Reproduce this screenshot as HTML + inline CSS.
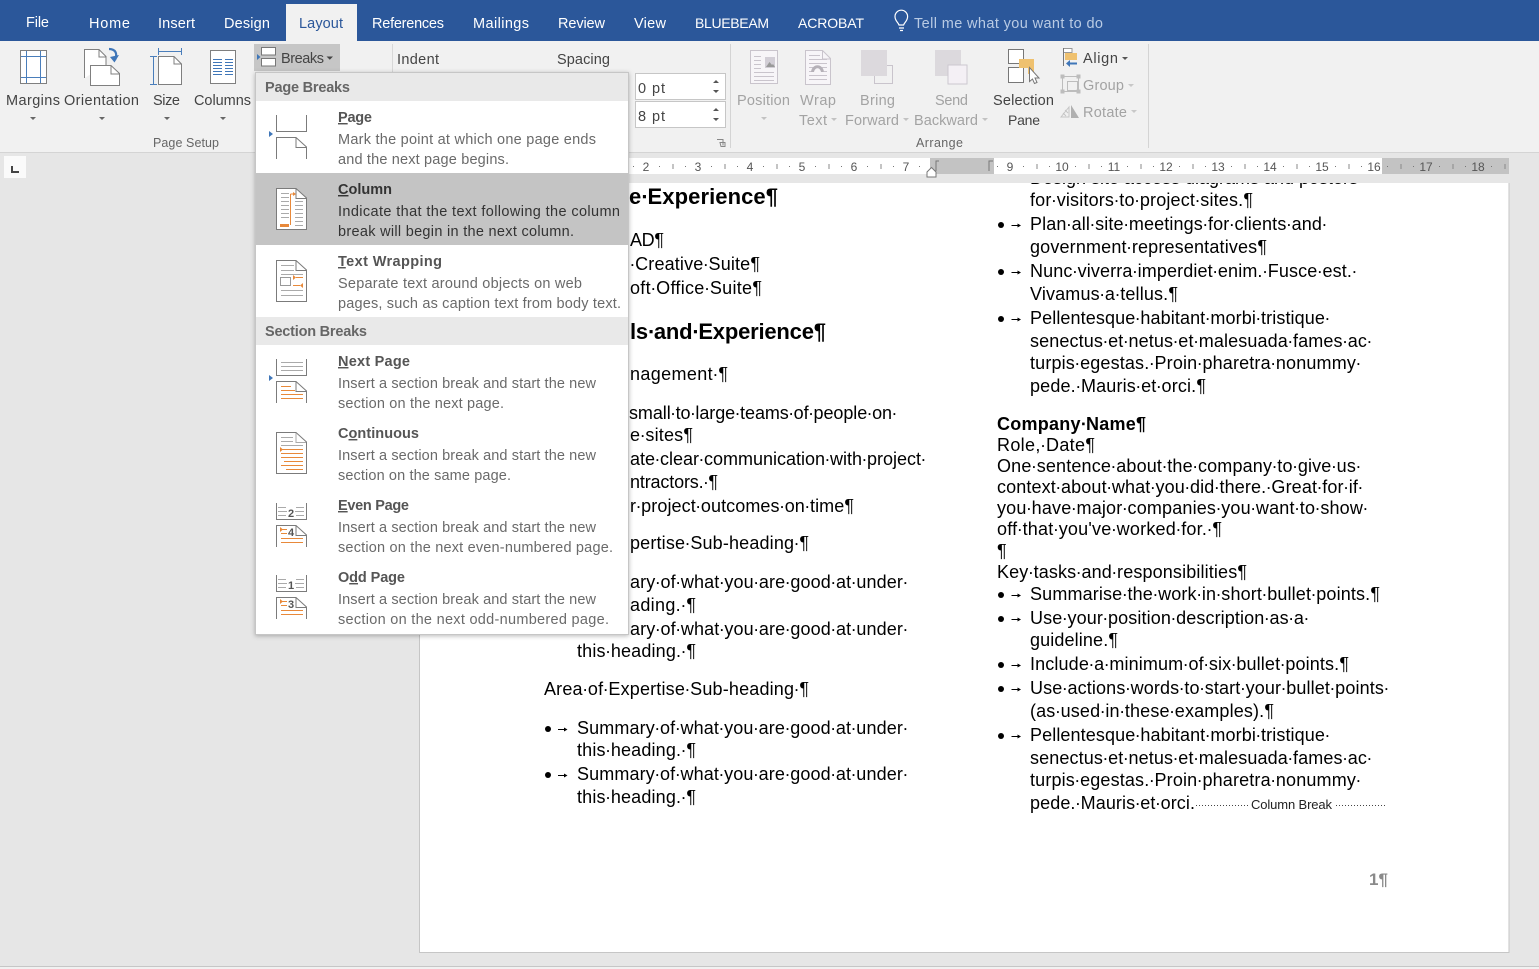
<!DOCTYPE html>
<html lang="en"><head><meta charset="utf-8"><title>Word Layout Breaks</title>
<style>
html,body{margin:0;padding:0;width:1539px;height:969px;overflow:hidden;background:#e6e6e6}
svg{display:block}
text{font-family:"Liberation Sans",sans-serif;white-space:pre}
.t{font-size:14.5px;fill:#fff}
.r{font-size:14.5px;fill:#444}
.g{font-size:14.5px;fill:#a3a3a3}
.s{font-size:12.5px;fill:#666}
.m{font-size:12px;fill:#555;text-anchor:middle}
.h{font-size:14.5px;font-weight:bold;fill:#555}
.k{font-size:14.5px;font-weight:bold;fill:#666}
.d{font-size:14.5px;fill:#6a6a6a}
.c{font-size:14.5px;fill:#333}
.b{font-size:18px;fill:#000}
.bb{font-size:18px;font-weight:bold;fill:#000}
.hh{font-size:22px;font-weight:bold;fill:#000}
.u{text-decoration:underline}
</style></head><body>
<svg xmlns="http://www.w3.org/2000/svg" width="1539" height="969" viewBox="0 0 1539 969">
<defs><filter id="sh" x="-5%" y="-5%" width="110%" height="110%"><feDropShadow dx="0" dy="1" stdDeviation="2.5" flood-color="#000" flood-opacity=".28"/></filter></defs>
<rect width="1539" height="969" fill="#e6e6e6"/>
<!-- title tabs -->
<rect width="1539" height="41" fill="#2b579a"/>
<rect y="41" width="1539" height="111" fill="#f1f1f1"/>
<rect y="152" width="1539" height="1" fill="#d4d4d4"/>
<rect x="286" y="4" width="71" height="38" fill="#f1f1f1"/>
<text class="t" x="26" y="27" textLength="23">File</text>
<text class="t" x="89" y="28" textLength="41">Home</text>
<text class="t" x="158" y="28" textLength="37">Insert</text>
<text class="t" x="224" y="28" textLength="46">Design</text>
<text class="t" x="299" y="28" textLength="44" style="fill:#2b579a">Layout</text>
<text class="t" x="372" y="28" textLength="72">References</text>
<text class="t" x="473" y="28" textLength="56">Mailings</text>
<text class="t" x="558" y="28" textLength="47">Review</text>
<text class="t" x="634" y="28" textLength="32">View</text>
<text class="t" x="695" y="28" textLength="74" style="font-size:14px">BLUEBEAM</text>
<text class="t" x="798" y="28" textLength="66" style="font-size:14px">ACROBAT</text>
<text class="t" x="914" y="28" textLength="189" style="fill:#b9cbe4">Tell me what you want to do</text>
<path d="M899 25c-1-3-4-4-4-8.500a6.300 6.300 0 0 1 12.600 0c0 4.500-3 5.500-4 8.500zM899 28h5M900 30.500h3" fill="none" stroke="#fff" stroke-width="1.200"/>
<!-- ribbon: Page Setup -->
<g fill="none" stroke="#7f7f7f">
<rect x="20.500" y="50.500" width="26" height="33" fill="#fff"/>
<path d="M26.500 51v32M40.500 51v32M21 56.500h25M21 77.500h25" stroke="#4a7ebb"/>
<path d="M84.500 78V49.500H99l7 7V65" fill="#fff"/>
<path d="M99 50v7h7"/>
<path d="M90.500 85.500V65.500H111l8.500 8v12z" fill="#fff"/>
<path d="M111 66v8h8"/>
<path d="M158.500 56.500H174l7.500 7.500v20.500h-23z" fill="#fff"/>
<path d="M174 57v7h7"/>
<path d="M158 51.500h24M158.500 48v7M181.500 48v7M153.500 57v28M150 56.500h7M150 84.500h7" stroke="#4a7ebb"/>
<rect x="210.500" y="50.500" width="25" height="33" fill="#fff"/>
<path d="M213 59.500h9M225 59.500h8M213 62.500h9M225 62.500h8M213 65.500h9M225 65.500h8M213 68.500h9M225 68.500h8M213 71.500h9M225 71.500h8M213 74.500h9M225 74.500h8" stroke="#3f76b8"/>
</g>
<path d="M109 49c6 0 9 4 6 11" fill="none" stroke="#3f76b8" stroke-width="2.200"/>
<path d="M110 57l4.500 5.500L119 55z" fill="#3f76b8"/>
<text class="r" x="6" y="105" textLength="54">Margins</text>
<text class="r" x="64" y="105" textLength="75">Orientation</text>
<text class="r" x="153" y="105" textLength="27">Size</text>
<text class="r" x="194" y="105" textLength="57">Columns</text>
<path d="M30 117h6l-3 3zM99 117h6l-3 3zM164 117h6l-3 3zM220 117h6l-3 3z" fill="#666"/>
<text class="s" x="153" y="147" textLength="66">Page Setup</text>
<!-- Breaks button -->
<rect x="254" y="44" width="86" height="27" fill="#c6c6c6"/>
<path d="M261.500 48v-0.500h14v7.500h-14zM261.500 66v-7.500h14V66z" fill="#fff" stroke="#777"/>
<path d="M257 54l3.500 3-3.500 3z" fill="#3f76b8"/>
<text class="r" x="281" y="63" textLength="43">Breaks</text>
<path d="M326.500 56.500h6.500l-3.200 3.200z" fill="#444"/>
<rect x="392" y="44" width="1" height="104" fill="#d8d8d8"/>
<text class="r" x="397" y="64" textLength="42">Indent</text>
<text class="r" x="557" y="64" textLength="53">Spacing</text>
<rect x="635.500" y="73.500" width="90" height="26" fill="#fff" stroke="#c6c6c6"/>
<rect x="635.500" y="101.500" width="90" height="26" fill="#fff" stroke="#c6c6c6"/>
<text class="r" x="638" y="93" textLength="27">0 pt</text>
<text class="r" x="638" y="121" textLength="27">8 pt</text>
<path d="M713 83l3-3 3 3zM713 90l3 3 3-3zM713 111l3-3 3 3zM713 118l3 3 3-3z" fill="#555"/>
<path d="M717 139.500h6v6M720 142.500h5v4h-4z" fill="none" stroke="#888"/>
<rect x="730" y="44" width="1" height="104" fill="#d4d4d4"/>
<!-- Arrange -->
<g fill="none" stroke="#c9c4cc">
<rect x="750.500" y="50.500" width="27" height="33" fill="#f7f5f8"/>
<path d="M754 56.500h7M754 60.500h7M754 64.500h7M754 68.500h7M754 72.500h20M754 76.500h20M754 80.500h20"/>
<path d="M805.500 50.500h17l8 8v26h-25z" fill="#f7f5f8"/>
<path d="M822.500 51v8h8M809 55.500h11M809 59.500h18M809 63.500h18M809 67.500h5M822 67.500h5M809 71.500h3M824 71.500h3M809 75.500h18M809 79.500h18"/>
<rect x="874.500" y="65.500" width="18" height="18"/>
<rect x="948.500" y="65.500" width="18" height="18" fill="#f4f0f5"/>
</g>
<rect x="765" y="57" width="10" height="11" fill="#d2ced6"/>
<path d="M766 67l3.500-5 2.500 3 1-1 2 3z" fill="#999"/>
<path d="M811 72c1-9 12-9 13 0h-3c-1-5-6-5-7 0z" fill="#b5b1b8"/>
<rect x="861" y="50" width="26" height="26" fill="#dcd9dd"/>
<rect x="935" y="50" width="26" height="26" fill="#dcd9dd"/>
<rect x="948" y="65" width="19" height="19" fill="#f4f0f5" stroke="#ccc8d0"/>
<text class="g" x="737" y="105" textLength="53">Position</text>
<path d="M761 117h6l-3 3z" fill="#c2c2c2"/>
<text class="g" x="800" y="105" textLength="36">Wrap</text>
<text class="g" x="799" y="125" textLength="28">Text</text>
<path d="M831 118h6l-3 3z" fill="#c2c2c2"/>
<text class="g" x="860" y="105" textLength="35">Bring</text>
<text class="g" x="845" y="125" textLength="54">Forward</text>
<path d="M903 118h6l-3 3z" fill="#c2c2c2"/>
<text class="g" x="935" y="105" textLength="33">Send</text>
<text class="g" x="914" y="125" textLength="64">Backward</text>
<path d="M982 118h6l-3 3z" fill="#c2c2c2"/>
<!-- selection pane -->
<rect x="1008.500" y="49.500" width="15" height="14" fill="#fff" stroke="#777"/>
<rect x="1008.500" y="67.500" width="15" height="15" fill="#fff" stroke="#777"/>
<path d="M1019 59h15v15h-6v-6h-9z" fill="#efc16f"/>
<path d="M1029.500 67.500v14l3-2.500 2 4.500 2.500-1-2-4.500h4z" fill="#fff" stroke="#777"/>
<text class="r" x="993" y="105" textLength="61">Selection</text>
<text class="r" x="1008" y="125" textLength="32" style="font-size:14px">Pane</text>
<text class="s" x="916" y="147" textLength="47">Arrange</text>
<path d="M1063.500 48v18" stroke="#777" fill="none"/>
<path d="M1064 48.500h8v4h-8" fill="#fff" stroke="#999"/>
<rect x="1065" y="53" width="12" height="7" fill="#efc16f"/>
<path d="M1077 63.500h-8" stroke="#3f76b8" stroke-width="2" fill="none"/>
<path d="M1070 60l-4 3.500 4 3.500z" fill="#3f76b8"/>
<text class="r" x="1083" y="63" textLength="35">Align</text>
<path d="M1122 57h6l-3 3z" fill="#555"/>
<g fill="none" stroke="#bdbdbd">
<rect x="1062.500" y="76.500" width="16" height="15"/>
<rect x="1067.500" y="81.500" width="10" height="9"/>
<path d="M1061 75h3v3h-3zM1077 75h3v3h-3zM1061 90h3v3h-3zM1077 90h3v3h-3z" fill="#bdbdbd"/>
</g>
<text class="g" x="1083" y="90" textLength="41">Group</text>
<path d="M1128 84h6l-3 3z" fill="#c8c8c8"/>
<path d="M1061 117l8-10v10zM1063 113l3 3M1065 110l3 3" fill="none" stroke="#c5c5c5"/>
<path d="M1071 105l8 13h-8z" fill="#b0b0b0"/>
<text class="g" x="1083" y="117" textLength="44">Rotate</text>
<path d="M1131 110h6l-3 3z" fill="#c8c8c8"/>
<rect x="1148" y="44" width="1" height="104" fill="#d4d4d4"/>
<!-- tab stop selector -->
<rect x="4" y="156" width="22" height="22" fill="#fafafa"/>
<path d="M12 166v6h7" fill="none" stroke="#444" stroke-width="2"/>
<!-- page -->
<rect x="420" y="183" width="1089" height="769" fill="#fff"/>
<path d="M419.500 183v769.500h1089.500V183" fill="none" stroke="#c6c6c6"/>
<rect y="966" width="1539" height="1" fill="#c6c6c6"/>
<rect y="967" width="1539" height="2" fill="#f1f1f1"/>
<!-- left column -->
<text class="hh" x="629" y="204" textLength="149">e∙Experience¶</text>
<text class="b" x="630" y="246" textLength="34">AD¶</text>
<text class="b" x="630" y="270" textLength="130">∙Creative∙Suite¶</text>
<text class="b" x="630" y="294" textLength="132">oft∙Office∙Suite¶</text>
<text class="hh" x="630" y="339" textLength="196">ls∙and∙Experience¶</text>
<text class="b" x="630" y="380" textLength="98">nagement∙¶</text>
<text class="b" x="629" y="419" textLength="268">small∙to∙large∙teams∙of∙people∙on∙</text>
<text class="b" x="630" y="441" textLength="63">e∙sites¶</text>
<text class="b" x="630" y="465" textLength="296">ate∙clear∙communication∙with∙project∙</text>
<text class="b" x="630" y="488" textLength="88">ntractors.∙¶</text>
<text class="b" x="630" y="512" textLength="224">r∙project∙outcomes∙on∙time¶</text>
<text class="b" x="630" y="549" textLength="179">pertise∙Sub-heading∙¶</text>
<text class="b" x="630" y="588" textLength="278">ary∙of∙what∙you∙are∙good∙at∙under∙</text>
<text class="b" x="630" y="611" textLength="66">ading.∙¶</text>
<text class="b" x="630" y="635" textLength="278">ary∙of∙what∙you∙are∙good∙at∙under∙</text>
<text class="b" x="577" y="657" textLength="119">this∙heading.∙¶</text>
<text class="b" x="544" y="695" textLength="265">Area∙of∙Expertise∙Sub-heading∙¶</text>
<text class="b" x="577" y="734" textLength="331">Summary∙of∙what∙you∙are∙good∙at∙under∙</text>
<text class="b" x="577" y="756" textLength="119">this∙heading.∙¶</text>
<text class="b" x="577" y="780" textLength="331">Summary∙of∙what∙you∙are∙good∙at∙under∙</text>
<text class="b" x="577" y="803" textLength="119">this∙heading.∙¶</text>
<g fill="#000"><circle cx="548" cy="729" r="3"/><circle cx="548" cy="775" r="3"/><circle cx="1001" cy="225" r="3"/><circle cx="1001" cy="272" r="3"/><circle cx="1001" cy="319" r="3"/><circle cx="1001" cy="595" r="3"/><circle cx="1001" cy="619" r="3"/><circle cx="1001" cy="665" r="3"/><circle cx="1001" cy="689" r="3"/><circle cx="1001" cy="736" r="3"/></g>
<path d="M558 729.500h6M558 775.500h6M1011.500 225.500h6M1011.500 272.500h6M1011.500 319.500h6M1011.500 595.500h6M1011.500 619.500h6M1011.500 665.500h6M1011.500 689.500h6M1011.500 736.500h6" stroke="#000" fill="none"/>
<path d="M564 727.500l3.500 2-3.500 2zM564 773.500l3.500 2-3.500 2zM1017.500 223.500l3.500 2-3.500 2zM1017.500 270.500l3.500 2-3.500 2zM1017.500 317.500l3.500 2-3.500 2zM1017.500 593.500l3.500 2-3.500 2zM1017.500 617.500l3.500 2-3.500 2zM1017.500 663.500l3.500 2-3.500 2zM1017.500 687.500l3.500 2-3.500 2zM1017.500 734.500l3.500 2-3.500 2z" fill="#000"/>
<!-- right column -->
<text class="b" x="1030" y="184" textLength="333">Design∙site∙access∙diagrams∙and∙posters∙</text>
<text class="b" x="1030" y="206" textLength="223">for∙visitors∙to∙project∙sites.¶</text>
<text class="b" x="1030" y="230" textLength="297">Plan∙all∙site∙meetings∙for∙clients∙and∙</text>
<text class="b" x="1030" y="253" textLength="237">government∙representatives¶</text>
<text class="b" x="1030" y="277" textLength="327">Nunc∙viverra∙imperdiet∙enim.∙Fusce∙est.∙</text>
<text class="b" x="1030" y="300" textLength="148">Vivamus∙a∙tellus.¶</text>
<text class="b" x="1030" y="324" textLength="300">Pellentesque∙habitant∙morbi∙tristique∙</text>
<text class="b" x="1030" y="347" textLength="342">senectus∙et∙netus∙et∙malesuada∙fames∙ac∙</text>
<text class="b" x="1030" y="369" textLength="331">turpis∙egestas.∙Proin∙pharetra∙nonummy∙</text>
<text class="b" x="1030" y="392" textLength="176">pede.∙Mauris∙et∙orci.¶</text>
<text class="bb" x="997" y="430" textLength="149">Company∙Name¶</text>
<text class="b" x="997" y="451" textLength="98">Role,∙Date¶</text>
<text class="b" x="997" y="472" textLength="364">One∙sentence∙about∙the∙company∙to∙give∙us∙</text>
<text class="b" x="997" y="493" textLength="366">context∙about∙what∙you∙did∙there.∙Great∙for∙if∙</text>
<text class="b" x="997" y="514" textLength="371">you∙have∙major∙companies∙you∙want∙to∙show∙</text>
<text class="b" x="997" y="535" textLength="225">off∙that∙you've∙worked∙for.∙¶</text>
<text class="b" x="997" y="557">¶</text>
<text class="b" x="997" y="578" textLength="250">Key∙tasks∙and∙responsibilities¶</text>
<text class="b" x="1030" y="600" textLength="350">Summarise∙the∙work∙in∙short∙bullet∙points.¶</text>
<text class="b" x="1030" y="624" textLength="279">Use∙your∙position∙description∙as∙a∙</text>
<text class="b" x="1030" y="646" textLength="88">guideline.¶</text>
<text class="b" x="1030" y="670" textLength="319">Include∙a∙minimum∙of∙six∙bullet∙points.¶</text>
<text class="b" x="1030" y="694" textLength="359">Use∙actions∙words∙to∙start∙your∙bullet∙points∙</text>
<text class="b" x="1030" y="717" textLength="244">(as∙used∙in∙these∙examples).¶</text>
<text class="b" x="1030" y="741" textLength="300">Pellentesque∙habitant∙morbi∙tristique∙</text>
<text class="b" x="1030" y="764" textLength="342">senectus∙et∙netus∙et∙malesuada∙fames∙ac∙</text>
<text class="b" x="1030" y="786" textLength="331">turpis∙egestas.∙Proin∙pharetra∙nonummy∙</text>
<text class="b" x="1030" y="809" textLength="165">pede.∙Mauris∙et∙orci.</text>
<path d="M1196 805.500h53M1336 805.500h51" stroke="#444" stroke-dasharray="1 2" fill="none"/>
<text x="1251" y="809" font-size="13" textLength="81" fill="#222">Column Break</text>
<text x="1369" y="885" font-size="17" font-weight="bold" textLength="19" fill="#8a8a8a">1¶</text>
<!-- ruler (covers top of page overflow) -->
<rect x="419" y="174" width="1091" height="9" fill="#e6e6e6"/>
<rect x="420" y="158" width="962" height="16" fill="#fff"/>
<rect x="1382" y="158" width="127" height="16" fill="#c3c3c3"/>
<path d="M633 166.500H1509" stroke="#777" stroke-dasharray="1 25" fill="none"/>
<path d="M672.500 166.500H1509" stroke="#888" stroke-width="5" stroke-dasharray="1 51" fill="none"/>
<rect x="930" y="158" width="64" height="16" fill="#c3c3c3"/>
<path d="M936 171v-10h3M989 171v-10h4" fill="none" stroke="#777"/>
<path d="M927 177v-5l4.500-4.500 4.500 4.500v5z" fill="#fff" stroke="#777"/>
<g>
<text class="m" x="646" y="171">2</text><text class="m" x="698" y="171">3</text><text class="m" x="750" y="171">4</text><text class="m" x="802" y="171">5</text><text class="m" x="854" y="171">6</text><text class="m" x="906" y="171">7</text><text class="m" x="1010" y="171">9</text><text class="m" x="1062" y="171">10</text><text class="m" x="1114" y="171">11</text><text class="m" x="1166" y="171">12</text><text class="m" x="1218" y="171">13</text><text class="m" x="1270" y="171">14</text><text class="m" x="1322" y="171">15</text><text class="m" x="1374" y="171">16</text><text class="m" x="1426" y="171">17</text><text class="m" x="1478" y="171">18</text>
</g>
<!-- dropdown menu -->
<rect x="255.500" y="72.500" width="373" height="562" fill="#fff" stroke="#c6c6c6" filter="url(#sh)"/>
<rect x="256" y="73" width="372" height="28" fill="#e9e9e9"/>
<rect x="256" y="317" width="372" height="28" fill="#e9e9e9"/>
<rect x="256" y="173" width="372" height="72" fill="#c4c4c4"/>
<text class="k" x="265" y="92" textLength="85">Page Breaks</text>
<text class="k" x="265" y="336" textLength="102">Section Breaks</text>

<text class="h" x="338" y="122" textLength="34"><tspan class="u">P</tspan>age</text>
<text class="d" x="338" y="144" textLength="258">Mark the point at which one page ends</text>
<text class="d" x="338" y="164" textLength="171">and the next page begins.</text>
<text class="h" x="338" y="194" textLength="54" style="fill:#333"><tspan class="u">C</tspan>olumn</text>
<text class="c" x="338" y="216" textLength="282">Indicate that the text following the column</text>
<text class="c" x="338" y="236" textLength="236">break will begin in the next column.</text>
<text class="h" x="338" y="266" textLength="104"><tspan class="u">T</tspan>ext Wrapping</text>
<text class="d" x="338" y="288" textLength="244">Separate text around objects on web</text>
<text class="d" x="338" y="308" textLength="283">pages, such as caption text from body text.</text>
<text class="h" x="338" y="366" textLength="72"><tspan class="u">N</tspan>ext Page</text>
<text class="d" x="338" y="388" textLength="258">Insert a section break and start the new</text>
<text class="d" x="338" y="408" textLength="166">section on the next page.</text>
<text class="h" x="338" y="438" textLength="81">C<tspan class="u">o</tspan>ntinuous</text>
<text class="d" x="338" y="460" textLength="258">Insert a section break and start the new</text>
<text class="d" x="338" y="480" textLength="173">section on the same page.</text>
<text class="h" x="338" y="510" textLength="71"><tspan class="u">E</tspan>ven Page</text>
<text class="d" x="338" y="532" textLength="258">Insert a section break and start the new</text>
<text class="d" x="338" y="552" textLength="275">section on the next even-numbered page.</text>
<text class="h" x="338" y="582" textLength="67">O<tspan class="u">d</tspan>d Page</text>
<text class="d" x="338" y="604" textLength="258">Insert a section break and start the new</text>
<text class="d" x="338" y="624" textLength="271">section on the next odd-numbered page.</text>
<!-- menu icons -->
<g fill="none" stroke="#7b7b7b">
<path d="M276.500 115v16.500h30V115M276.500 159v-21.500H296l10.500 9.500V159M296 138v9.500h10"/>
<path d="M276.500 188.500H296l10.500 9.500v31.500h-30z" fill="#fff"/>
<path d="M296 189v9.500h10"/>
<path d="M281 193.500h8M281 197.500h8M281 201.500h8M281 205.500h8M281 209.500h8M281 213.500h8M281 217.500h8M295 201.500h8M295 205.500h8M295 209.500h8M295 213.500h8M295 217.500h8M295 221.500h8M295 225.500h8" stroke="#aaa"/>
<path d="M276.500 260.500H296l10.500 9.500v31.500h-30z" fill="#fff"/>
<path d="M296 261v9.500h10"/>
<path d="M281 265.500h13M281 270.500h13M281 274.500h22M281 290.500h22M281 295.500h22" stroke="#aaa"/>
<rect x="280.500" y="277.500" width="10" height="8" stroke="#999"/>
<path d="M276.500 359v16.500h30V359M276.500 403v-21.500H296l10.500 9.500V403M296 382v9.500h10"/>
<path d="M281 362.500h22M281 366.500h22M281 370.500h22" stroke="#aaa"/>
<path d="M276.500 432.500H296l10.500 9.500v31.500h-30z" fill="#fff"/>
<path d="M296 433v9.500h10M281 437.500h12M281 441.500h12M281 445.500h22" stroke="#aaa"/>
<path d="M276.500 503v16.500h30V503M276.500 547v-21.500H296l10.500 9.500V547M296 526v9.500h10"/>
<path d="M278 507.500h8M296 507.500h8M278 511.500h9M295 511.500h9M278 515.500h8M296 515.500h8" stroke="#aaa"/>
<path d="M276.500 575v16.500h30V575M276.500 619v-21.500H296l10.500 9.500V619M296 598v9.500h10"/>
<path d="M278 579.500h8M296 579.500h8M278 583.500h9M295 583.500h9M278 587.500h8M296 587.500h8" stroke="#aaa"/>
</g>
<g fill="none" stroke="#e8893a">
<path d="M290.500 194v31M290.500 194h3"/>
<path d="M296 277.500h7M293 285.500h7"/>
<path d="M281 386.500h10M281 390.500h14M281 394.500h22M281 398.500h22"/>
<path d="M281 449.500h22M281 453.500h22M281 457.500h22M284 461.500h19M281 465.500h22M286 469.500h17"/>
<path d="M281 529.500h6M281 533.500h6M281 538.500h22M281 542.500h22"/>
<path d="M281 601.500h6M281 605.500h6M281 610.500h22M281 614.500h22"/>
</g>
<rect x="280" y="224" width="9" height="3" fill="#e8893a"/>
<path d="M293 192l3 2-3 2zM293 275l3 2.500-3 2.500zM303 283l-3 2.500 3 2.500zM280 447l3 2.500-3 2.500zM280 527l3 2.500-3 2.500zM280 599l3 2.500-3 2.500z" fill="#e8893a"/>
<path d="M269 131l4 3-4 3zM269 375l4 3-4 3z" fill="#3f76b8"/>
<g font-size="11" font-weight="bold" fill="#555">
<text x="288" y="517">2</text><text x="288" y="536">4</text><text x="288" y="589">1</text><text x="288" y="608">3</text>
</g>
</svg>
</body></html>
